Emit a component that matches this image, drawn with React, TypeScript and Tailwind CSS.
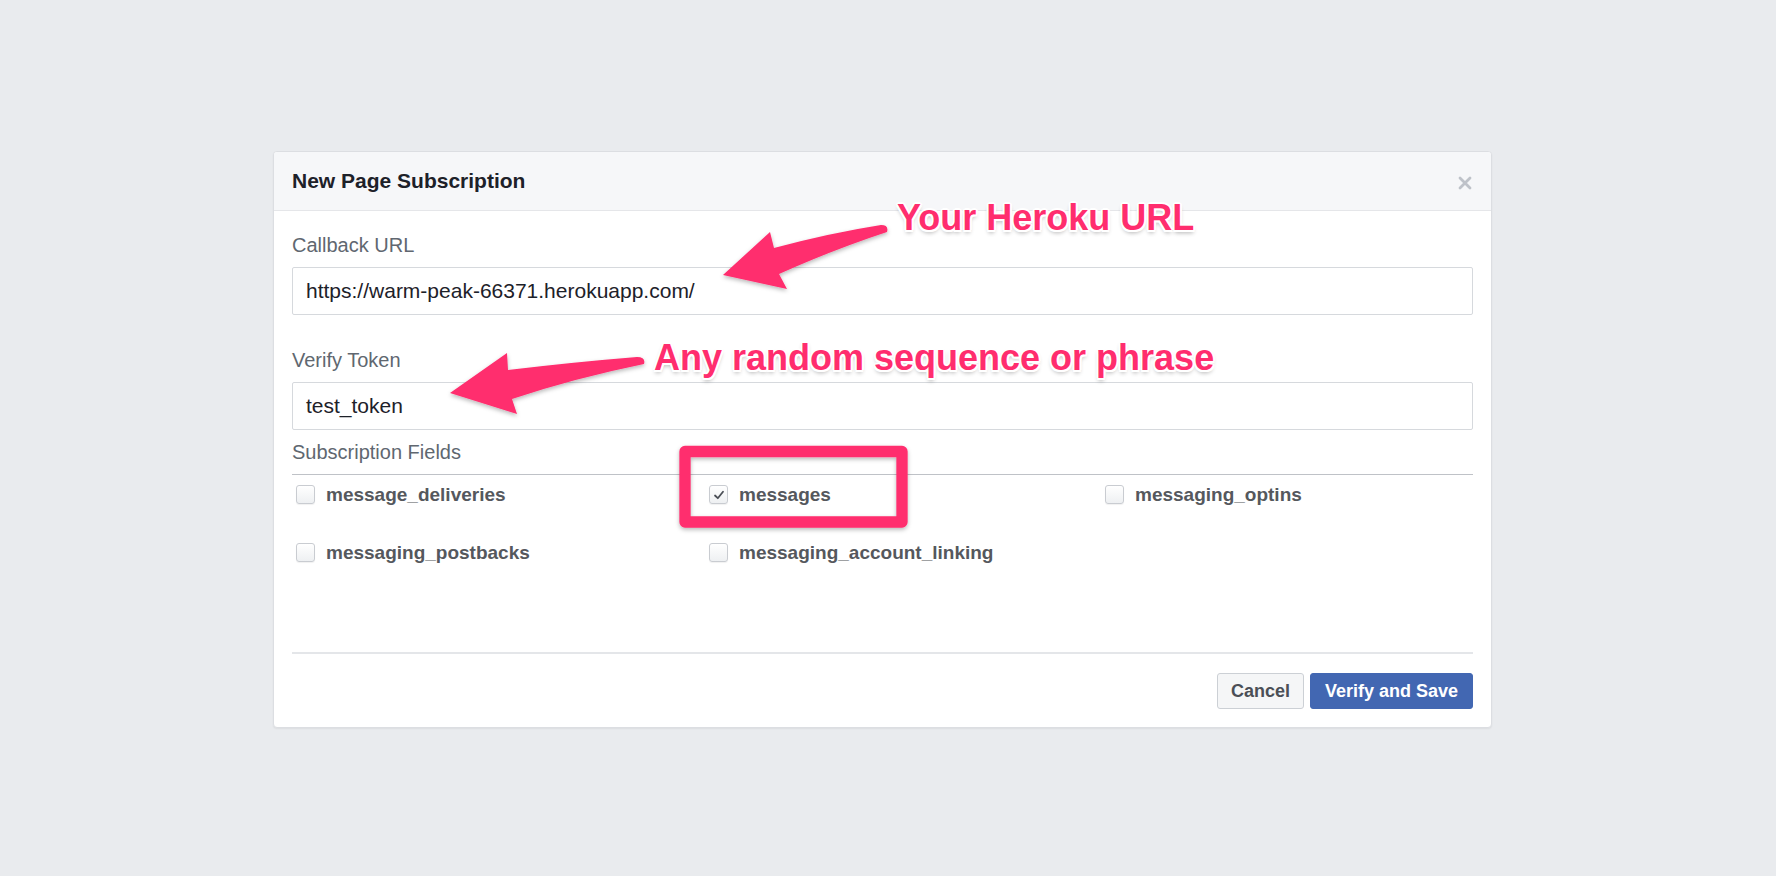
import React from "react";

const font = { fontFamily: '"Liberation Sans", Arial, Helvetica, sans-serif' };

function Checkbox({ checked }: { checked?: boolean }) {
  return (
    <span className="flex h-[19px] w-[19px] shrink-0 items-center justify-center rounded-[3px] border border-[#c9ccd1] bg-gradient-to-b from-white to-[#eef0f2] shadow-[0_1px_1px_rgba(0,0,0,0.06)]">
      {checked && (
        <svg width="12" height="12" viewBox="0 0 12 12">
          <path d="M2 6.5 L4.8 9.2 L10 2.8" fill="none" stroke="#4b4f56" strokeWidth="1.8" strokeLinecap="round" strokeLinejoin="round" />
        </svg>
      )}
    </span>
  );
}

function Field({ label, checked }: { label: string; checked?: boolean }) {
  return (
    <div className="flex h-[19px] items-center gap-[11px]">
      <Checkbox checked={checked} />
      <span className="text-[19px] font-bold leading-[19px] text-[#55585d]">{label}</span>
    </div>
  );
}

export default function App() {
  return (
    <div className="relative min-h-[876px] w-full overflow-hidden bg-[#e9ebee] pl-[273px] pt-[151px]" style={font}>
      <div className="w-[1219px] overflow-hidden rounded-[4px] border border-[#dcdee2] bg-white shadow-[0_1px_2px_rgba(0,0,0,0.06)]">
        <div className="flex h-[59px] items-center justify-between border-b border-[#e5e6e9] bg-[#f6f7f9] pl-[18px] pr-[18px]">
          <span className="text-[21px] font-bold text-[#1d2129]">New Page Subscription</span>
          <svg width="14" height="14" viewBox="0 0 14 14" className="mr-[1px] mt-[3px]">
            <path d="M2 2 L12 12 M12 2 L2 12" stroke="#bec2c9" strokeWidth="2.8" strokeLinecap="round" />
          </svg>
        </div>
        <div className="px-[18px] pb-[18px] pt-[22px]">
          <div className="text-[20px] leading-[24px] text-[#606770]">Callback URL</div>
          <div className="mt-[10px] flex h-[48px] items-center rounded-[2px] border border-[#d6d9dd] px-[13px] text-[21px] text-[#1d2129]">
            https://warm-peak-66371.herokuapp.com/
          </div>
          <div className="mt-[33px] text-[20px] leading-[24px] text-[#606770]">Verify Token</div>
          <div className="mt-[10px] flex h-[48px] items-center rounded-[2px] border border-[#d6d9dd] px-[13px] text-[21px] text-[#1d2129]">
            test_token
          </div>
          <div className="mt-[10px] border-b border-[#bfc2c7] pb-[10px] text-[20px] leading-[24px] text-[#606770]">
            Subscription Fields
          </div>
          <div className="mt-[10px] grid grid-cols-[413px_396px_1fr] gap-y-[39px] pl-[4px]">
            <Field label="message_deliveries" />
            <Field label="messages" checked />
            <Field label="messaging_optins" />
            <Field label="messaging_postbacks" />
            <Field label="messaging_account_linking" />
          </div>
          <div className="mt-[90px] h-[2px] bg-[#e4e6e9]" />
          <div className="mt-[19px] flex justify-end gap-[6px]">
            <button className="flex h-[36px] items-center rounded-[3px] border border-[#ccd0d5] bg-[#f5f6f7] px-[13px] text-[18px] font-bold text-[#4b4f56]">
              Cancel
            </button>
            <button className="flex h-[36px] items-center rounded-[3px] border border-[#4267b2] bg-[#4267b2] px-[14px] text-[18px] font-bold text-white">
              Verify and Save
            </button>
          </div>
        </div>
      </div>

      <svg className="pointer-events-none absolute left-0 top-0" width="1776" height="876" viewBox="0 0 1776 876">
        <defs>
          <filter id="sh" x="-20%" y="-20%" width="140%" height="140%">
            <feDropShadow dx="0" dy="2" stdDeviation="2" floodColor="#000" floodOpacity="0.28" />
          </filter>
        </defs>
        <path
          d="M723 275 L770 232 L774 248 Q830 233 881 225 Q889 225 887 232 Q835 249 779 274 L787 289 Z"
          fill="#ff2d6e"
          filter="url(#sh)"
        />
        <path
          d="M450 393 L507 353 L508 370 Q575 362 637 357 Q646 357 644 364 Q575 378 512 399 L517 414 Z"
          fill="#ff2d6e"
          filter="url(#sh)"
        />
        <rect x="685" y="451.5" width="217" height="70.5" fill="none" stroke="#ff2d6e" strokeWidth="11.3" strokeLinejoin="round" filter="url(#sh)" />
      </svg>

      <span className="pointer-events-none absolute left-[897px] top-[200px] whitespace-nowrap text-[36px] font-bold leading-[36px] text-[#ff2d6e] [text-shadow:2px_0_0_#fff,-2px_0_0_#fff,0_2px_0_#fff,0_-2px_0_#fff,1.5px_1.5px_0_#fff,-1.5px_-1.5px_0_#fff,1.5px_-1.5px_0_#fff,-1.5px_1.5px_0_#fff,0_3px_4px_rgba(0,0,0,0.3)]">
        Your Heroku URL
      </span>
      <span className="pointer-events-none absolute left-[654px] top-[340px] whitespace-nowrap text-[36px] font-bold leading-[36px] text-[#ff2d6e] [text-shadow:2px_0_0_#fff,-2px_0_0_#fff,0_2px_0_#fff,0_-2px_0_#fff,1.5px_1.5px_0_#fff,-1.5px_-1.5px_0_#fff,1.5px_-1.5px_0_#fff,-1.5px_1.5px_0_#fff,0_3px_4px_rgba(0,0,0,0.3)]">
        Any random sequence or phrase
      </span>
    </div>
  );
}
